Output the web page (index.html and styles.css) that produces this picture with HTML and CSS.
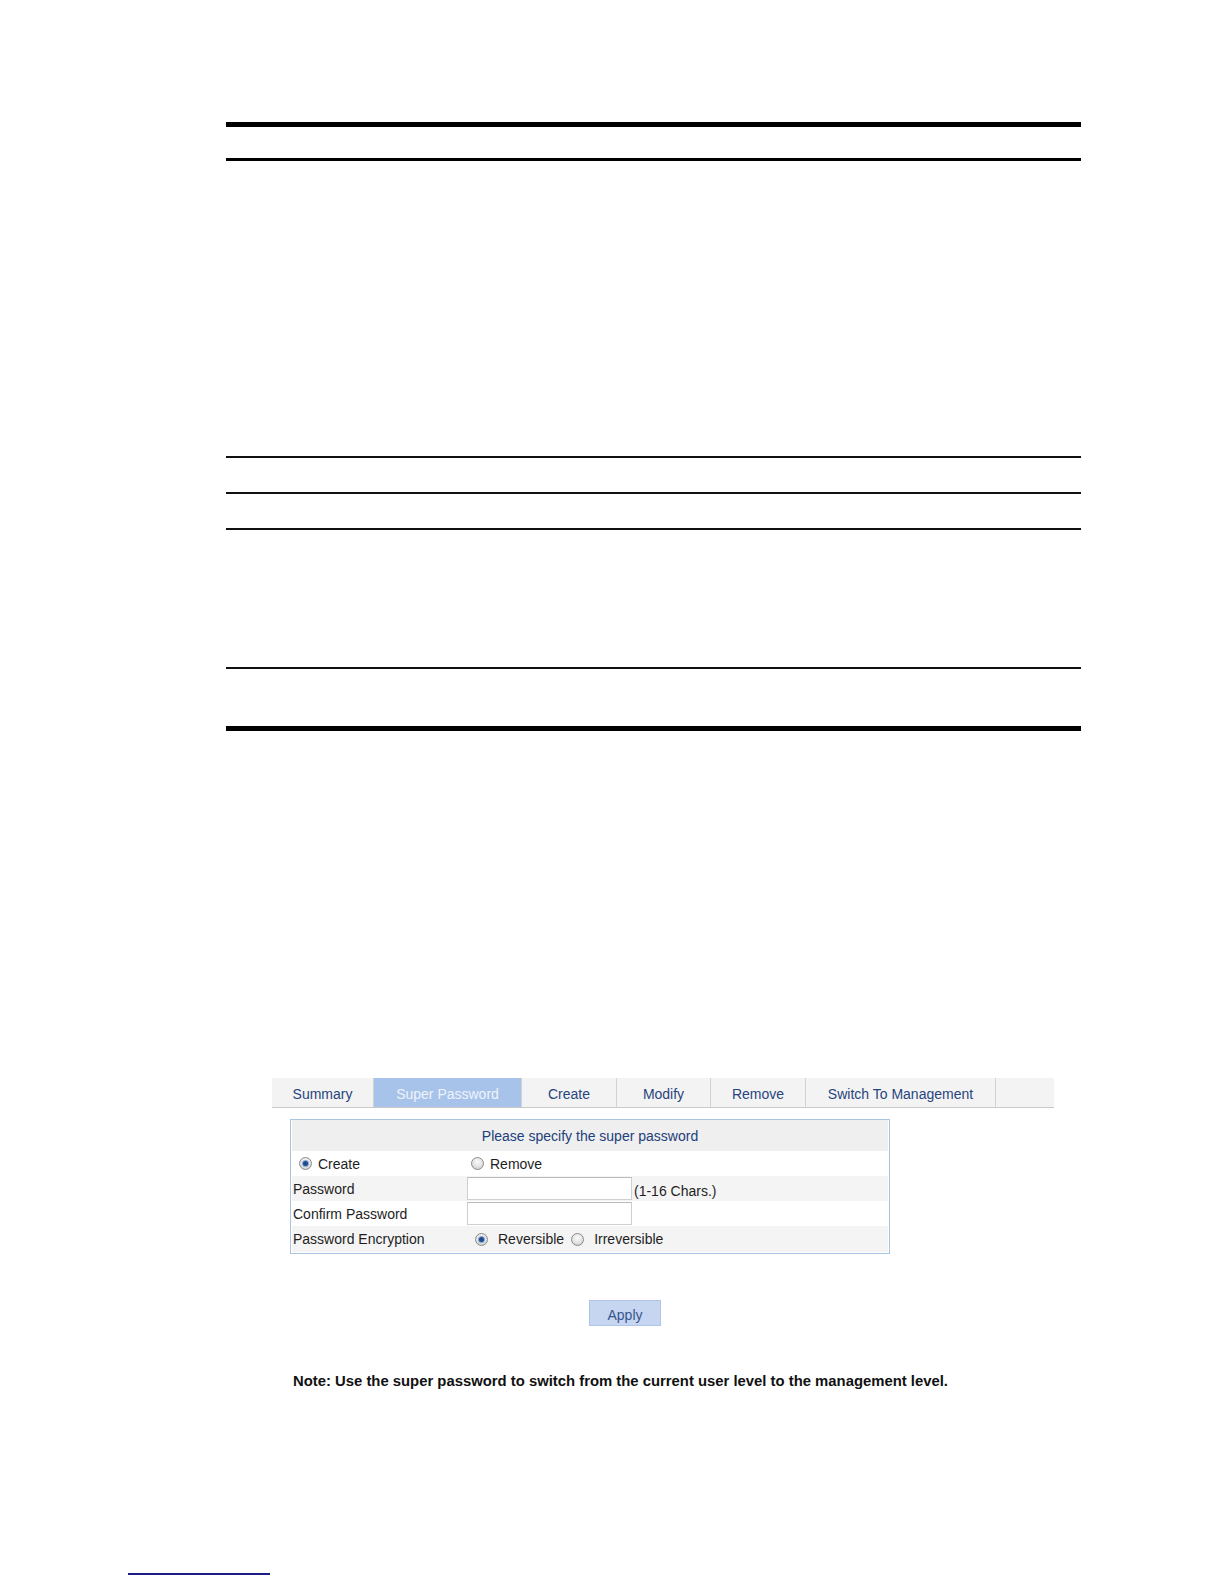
FILE: index.html
```html
<!DOCTYPE html>
<html lang="en">
<head>
<meta charset="utf-8">
<title>Super Password</title>
<link rel="stylesheet" href="styles.css">
</head>
<body>
<div class="page">
  <div class="doc-table">
    <div class="trow head"></div>
    <div class="trow r1"></div>
    <div class="trow r2"></div>
    <div class="trow r3"></div>
    <div class="trow r4"></div>
    <div class="trow r5 last"></div>
  </div>

  <div class="ui">
    <div class="tabs">
      <div class="tab w-summary">Summary</div>
      <div class="tab active w-super">Super Password</div>
      <div class="tab w-create">Create</div>
      <div class="tab w-modify">Modify</div>
      <div class="tab w-remove">Remove</div>
      <div class="tab w-switch">Switch To Management</div>
      <div class="tab filler"></div>
    </div>

    <div class="panel">
      <div class="panel-head">Please specify the super password</div>
      <div class="prow">
        <div class="plabel pad-create"><span class="radio checked"></span><span class="rtext">Create</span></div>
        <div class="pvalue pad-remove"><span class="radio"></span><span class="rtext r-remove">Remove</span></div>
      </div>
      <div class="prow alt">
        <div class="plabel">Password</div>
        <div class="pvalue"><span class="input"></span><span class="hint">(1-16 Chars.)</span></div>
      </div>
      <div class="prow">
        <div class="plabel">Confirm Password</div>
        <div class="pvalue"><span class="input"></span></div>
      </div>
      <div class="prow alt tall">
        <div class="plabel">Password Encryption</div>
        <div class="pvalue pad-enc"><span class="radio checked"></span><span class="rtext r-rev">Reversible</span><span class="radio"></span><span class="rtext r-irr">Irreversible</span></div>
      </div>
    </div>

    <div class="apply-wrap"><span class="apply">Apply</span></div>

    <p class="note">Note: Use the super password to switch from the current user level to the management level.</p>
  </div>

  <div class="foot-link"></div>
</div>
</body>
</html>
```

FILE: styles.css
```css
html, body {
  margin: 0;
  padding: 0;
  background: #ffffff;
}

body {
  font-family: "Liberation Sans", Arial, sans-serif;
  font-size: 14px;
  color: #222222;
}

.page {
  width: 1224px;
  height: 1584px;
  padding-top: 122px;
  box-sizing: border-box;
  position: relative;
  overflow: hidden;
}

/* document table rules */
.doc-table {
  margin-left: 226px;
  width: 855px;
  border-top: 5px solid #000;
}

.trow {
  border-bottom: 2px solid #111;
}

.trow.head { height: 31px; border-bottom: 3px solid #000; }
.trow.r1 { height: 295px; }
.trow.r2 { height: 34px; }
.trow.r3 { height: 34px; }
.trow.r4 { height: 137px; }
.trow.r5 { height: 57px; }
.trow.last { border-bottom: 5px solid #000; }

/* web UI screenshot */
.ui {
  margin-top: 347px;
}

.tabs {
  margin-left: 272px;
  width: 782px;
  height: 29px;
  display: flex;
  background: #f3f3f3;
  border-bottom: 1px solid #c9c9c9;
}

.tab {
  box-sizing: border-box;
  height: 29px;
  display: flex;
  align-items: center;
  justify-content: center;
  padding-top: 3px;
  color: #28457d;
  border-right: 1px solid #d2d2d2;
  white-space: nowrap;
}

.tab.active {
  background: #a8c3ea;
  color: #eef3fb;
}

.w-summary { width: 102px; }
.w-super { width: 148px; }
.w-create { width: 95px; }
.w-modify { width: 94px; }
.w-remove { width: 95px; }
.w-switch { width: 190px; }
.tab.filler { flex: 1; border-right: none; }

.panel {
  margin-top: 11px;
  margin-left: 290px;
  width: 600px;
  box-sizing: border-box;
  border: 1px solid #a9c5e3;
  padding: 0 1px 1px 1px;
}

.panel-head {
  height: 31px;
  background: #efefef;
  color: #22407a;
  display: flex;
  align-items: center;
  justify-content: center;
  padding-top: 1px;
  box-sizing: border-box;
}

.prow {
  height: 25px;
  display: flex;
  align-items: center;
  padding-left: 1px;
  background: #ffffff;
}

.prow.tall {
  height: 26px;
}

.prow.alt {
  background: #f4f4f4;
}

.plabel {
  width: 174px;
  flex: none;
  display: flex;
  align-items: center;
  color: #1e1e1e;
}

.pvalue {
  display: flex;
  align-items: center;
}

.pad-create { padding-left: 6px; box-sizing: border-box; }
.pad-remove { padding-left: 4px; }
.pad-enc { padding-left: 8px; }

.radio {
  width: 13px;
  height: 13px;
  box-sizing: border-box;
  border-radius: 50%;
  border: 1px solid #8a8b8b;
  background: radial-gradient(circle at 50% 35%, #fbfbfb 0%, #e2e2e2 55%, #c4c4c4 100%);
  display: inline-flex;
  align-items: center;
  justify-content: center;
  flex: none;
}

.radio.checked::after {
  content: "";
  width: 5px;
  height: 5px;
  border-radius: 50%;
  background: #1f4d8c;
  box-shadow: 0 0 0 1px #86a9d6;
}

.rtext {
  margin-left: 6px;
  color: #1e1e1e;
}

.r-remove { margin-left: 6px; }

.r-rev {
  margin-left: 10px;
  margin-right: 7px;
}

.r-irr { margin-left: 10px; }

.input {
  display: inline-block;
  width: 165px;
  height: 23px;
  box-sizing: border-box;
  background: #ffffff;
  border: 1px solid #cfcfcf;
  border-top-color: #b9b9b9;
}

.hint {
  margin-left: 2px;
  padding-top: 5px;
  color: #1e1e1e;
}

.apply-wrap {
  margin-top: 46px;
  margin-left: 589px;
  height: 26px;
}

.apply {
  display: inline-flex;
  width: 72px;
  height: 26px;
  box-sizing: border-box;
  align-items: center;
  justify-content: center;
  padding-top: 3px;
  background: #c6d6f0;
  border: 1px solid #afc4e6;
  color: #37558f;
}

.note {
  margin: 46px 0 0 293px;
  font-weight: bold;
  font-size: 14.85px;
  line-height: 18px;
  color: #111111;
}

.foot-link {
  margin-top: 183px;
  margin-left: 128px;
  width: 142px;
  border-bottom: 2px solid #1c1c8c;
}
```
